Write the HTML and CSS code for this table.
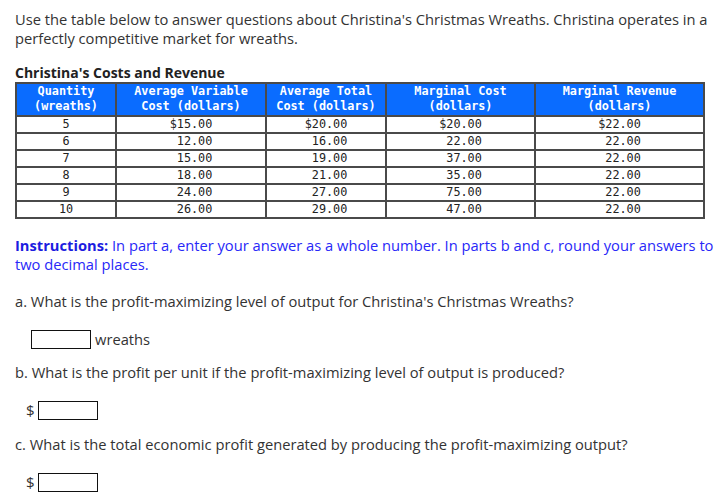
FILE: index.html
```html
<!DOCTYPE html>
<html>
<head>
<meta charset="utf-8">
<link rel="stylesheet" href="styles.css">
</head>
<body>
<div class="page">
  <p class="intro">Use the table below to answer questions about Christina's Christmas Wreaths. Christina operates in a perfectly competitive market for wreaths.</p>
  <div class="caption">Christina's Costs and Revenue</div>
  <table class="data">
    <colgroup>
      <col class="c1"><col class="c2"><col class="c3"><col class="c4"><col class="c5">
    </colgroup>
    <thead>
      <tr><th>Quantity<br>(wreaths)</th><th>Average Variable<br>Cost (dollars)</th><th>Average Total<br>Cost (dollars)</th><th>Marginal Cost<br>(dollars)</th><th>Marginal Revenue<br>(dollars)</th></tr>
    </thead>
    <tbody>
      <tr><td>5</td><td>$15.00</td><td>$20.00</td><td>$20.00</td><td>$22.00</td></tr>
      <tr><td>6</td><td> 12.00</td><td> 16.00</td><td> 22.00</td><td> 22.00</td></tr>
      <tr><td>7</td><td> 15.00</td><td> 19.00</td><td> 37.00</td><td> 22.00</td></tr>
      <tr><td>8</td><td> 18.00</td><td> 21.00</td><td> 35.00</td><td> 22.00</td></tr>
      <tr><td>9</td><td> 24.00</td><td> 27.00</td><td> 75.00</td><td> 22.00</td></tr>
      <tr><td>10</td><td> 26.00</td><td> 29.00</td><td> 47.00</td><td> 22.00</td></tr>
    </tbody>
  </table>
  <p class="instr"><b>Instructions:</b> In part a, enter your answer as a whole number. In parts b and c, round your answers to two decimal places.</p>
  <p class="q">a. What is the profit-maximizing level of output for Christina's Christmas Wreaths?</p>
  <div class="ans ans-a"><span class="box"></span><span class="unit">wreaths</span></div>
  <p class="q">b. What is the profit per unit if the profit-maximizing level of output is produced?</p>
  <div class="ans ans-d"><span class="dollar">$</span><span class="box"></span></div>
  <p class="q">c. What is the total economic profit generated by producing the profit-maximizing output?</p>
  <div class="ans ans-d"><span class="dollar">$</span><span class="box"></span></div>
</div>
</body>
</html>
```

FILE: styles.css
```css
html, body {
  margin: 0;
  padding: 0;
  background: #fff;
}
.page {
  padding: 10px 3px 0 15px;
  font-family: "Open Sans", "Liberation Sans", sans-serif;
  font-size: 14.7px;
  color: #333;
  line-height: 19px;
}
p { margin: 0; }
.intro { margin-bottom: 16px; }
.caption {
  font-weight: bold;
  font-size: 14px;
  color: #222;
  line-height: 18px;
  margin-bottom: 0;
}
.data {
  border-collapse: collapse;
  border: 2px solid #4a4a4a;
  font-family: "DejaVu Sans Mono", "Liberation Mono", monospace;
  font-size: 11.8px;
  table-layout: fixed;
  width: 690px;
}
.c1 { width: 100px; }
.c2 { width: 150px; }
.c3 { width: 120px; }
.c4 { width: 149px; }
.c5 { width: 169px; }
.data th {
  background: #0a6cff;
  color: #fff;
  font-weight: bold;
  line-height: 15px;
  padding: 0 2px 1px;
  border: 2px solid #4a4a4a;
  height: 29px;
}
.data td {
  border: 2px solid #4a4a4a;
  text-align: center;
  color: #222;
  line-height: 14px;
  padding: 0 2px 1px;
  white-space: pre;
}
.instr {
  color: #2828f8;
  margin-top: 17px;
  margin-bottom: 18px;
}
.instr b { color: #1c1ce0; }
.q { margin-bottom: 19px; }
.ans {
  display: flex;
  align-items: center;
  margin-bottom: 15px;
}
.ans-a { padding-left: 16px; margin-bottom: 14px; }
.ans-d { padding-left: 11px; }
.box {
  display: inline-block;
  width: 58px;
  height: 17px;
  border: 1px solid #111;
}
.unit { margin-left: 4px; }
.dollar { margin-right: 3px; font-size: 15px; }
```
